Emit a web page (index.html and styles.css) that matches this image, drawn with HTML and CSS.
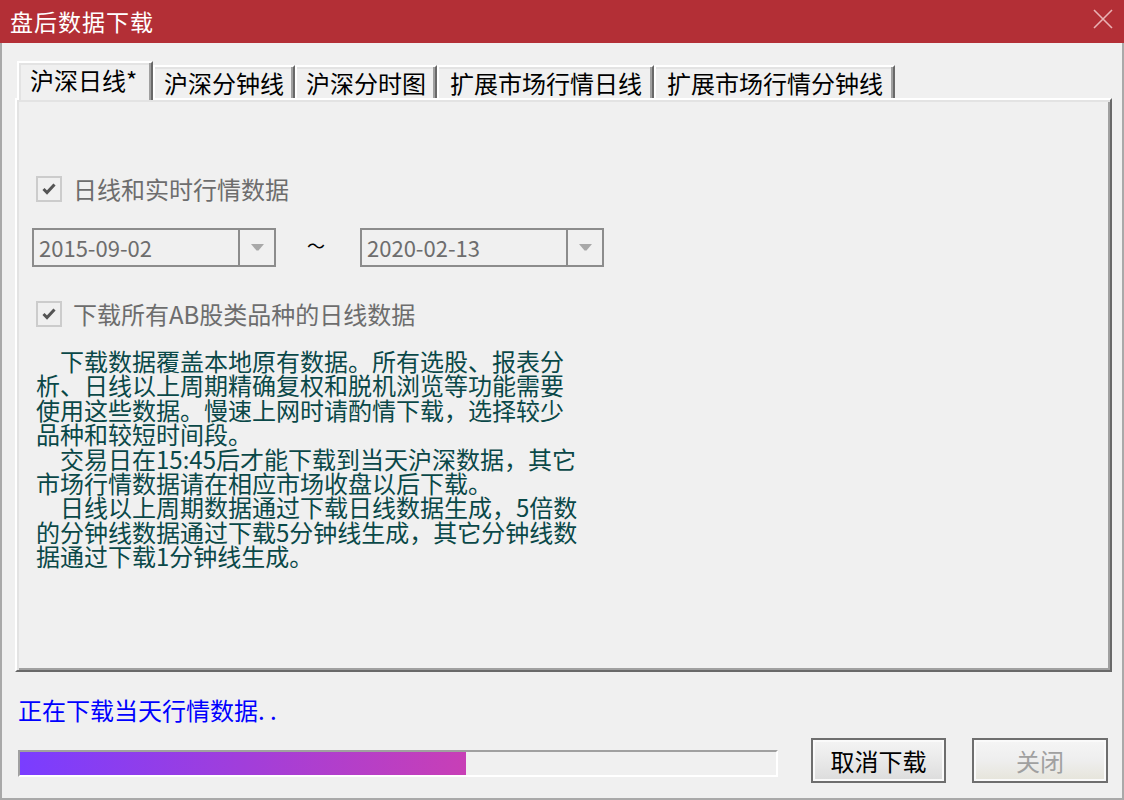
FILE: index.html
```html
<!DOCTYPE html>
<html lang="zh-CN">
<head>
    <meta charset="UTF-8">
    <meta name="viewport" content="width=device-width, initial-scale=1.0">
    <title>盘后数据下载</title>
    <link rel="stylesheet" href="styles.css">
</head>
<body>
    <div class="window">
        <div class="titlebar">
            <span class="title">盘后数据下载</span>
            <svg class="close" width="20" height="20" viewBox="0 0 20 20">
                <path d="M1 1 L19 19 M19 1 L1 19" stroke="#e9b2b4" stroke-width="1.6" fill="none"/>
            </svg>
        </div>
        <div class="client">
            <div class="tabs">
                <div class="tab active">沪深日线*</div>
                <div class="tab">沪深分钟线</div>
                <div class="tab">沪深分时图</div>
                <div class="tab wide">扩展市场行情日线</div>
                <div class="tab wide">扩展市场行情分钟线</div>
            </div>

            <div class="panel">
                <div class="check-row first">
                    <span class="checkbox">
                        <svg width="14" height="12" viewBox="0 0 14 12">
                            <path d="M1.5 6 L5 9.5 L12.5 1.5" stroke="#555" stroke-width="3" fill="none"/>
                        </svg>
                    </span>
                    <span class="check-label">日线和实时行情数据</span>
                </div>

                <div class="date-row">
                    <div class="combo">
                        <span class="combo-text">2015-09-02</span>
                        <span class="combo-btn">
                            <svg width="13" height="7" viewBox="0 0 13 7"><path d="M0 0 H13 L7.5 6.5 H5.5 Z" fill="#a8a8a8"/></svg>
                        </span>
                    </div>
                    <span class="tilde">～</span>
                    <div class="combo">
                        <span class="combo-text">2020-02-13</span>
                        <span class="combo-btn">
                            <svg width="13" height="7" viewBox="0 0 13 7"><path d="M0 0 H13 L7.5 6.5 H5.5 Z" fill="#a8a8a8"/></svg>
                        </span>
                    </div>
                </div>

                <div class="check-row second">
                    <span class="checkbox">
                        <svg width="14" height="12" viewBox="0 0 14 12">
                            <path d="M1.5 6 L5 9.5 L12.5 1.5" stroke="#555" stroke-width="3" fill="none"/>
                        </svg>
                    </span>
                    <span class="check-label">下载所有AB股类品种的日线数据</span>
                </div>

                <div class="notes">
                    <div class="indent">下载数据覆盖本地原有数据。所有选股、报表分</div>
                    <div>析、日线以上周期精确复权和脱机浏览等功能需要</div>
                    <div>使用这些数据。慢速上网时请酌情下载，选择较少</div>
                    <div>品种和较短时间段。</div>
                    <div class="indent">交易日在15:45后才能下载到当天沪深数据，其它</div>
                    <div>市场行情数据请在相应市场收盘以后下载。</div>
                    <div class="indent">日线以上周期数据通过下载日线数据生成，5倍数</div>
                    <div>的分钟线数据通过下载5分钟线生成，其它分钟线数</div>
                    <div>据通过下载1分钟线生成。</div>
                </div>
            </div>

            <div class="status">正在下载当天行情数据. .</div>

            <div class="bottom-row">
                <div class="progress">
                    <div class="progress-fill" style="width: 59%"></div>
                </div>
                <button class="btn cancel">取消下载</button>
                <button class="btn close-btn" disabled>关闭</button>
            </div>
        </div>
    </div>
</body>
</html>
```

FILE: styles.css
```css
body {
    margin: 0;
    background-color: #f0f0f0;
    font-family: "Noto Sans CJK SC", sans-serif;
}
.window {
    width: 1124px;
    height: 800px;
    display: flex;
    flex-direction: column;
    background-color: #f0f0f0;
}
.titlebar {
    height: 43px;
    flex-shrink: 0;
    background-color: #b32f36;
    display: flex;
    align-items: center;
    justify-content: space-between;
    padding: 0 11px 0 10px;
}
.title {
    color: #fff;
    font-size: 23px;
    line-height: 43px;
    letter-spacing: 1px;
}
.close {
    align-self: flex-start;
    margin-top: 9px;
}
.client {
    flex: 1;
    border-left: 2px solid #a9a9a9;
    border-right: 2px solid #a9a9a9;
    border-bottom: 2px solid #a9a9a9;
}

/* tabs */
.tabs {
    display: flex;
    align-items: flex-end;
    height: 37px;
    margin: 18px 0 0 15px;
}
.tab {
    box-sizing: border-box;
    height: 33px;
    padding: 0 9px;
    display: flex;
    align-items: center;
    font-size: 24px;
    line-height: 26px;
    color: #000;
    background-color: #f0f0f0;
    border-top: 2px solid #fff;
    border-left: 2px solid #fff;
    border-right: 2px solid #696969;
    box-shadow: inset -2px 0 0 #a0a0a0, inset 0 2px 0 #e3e3e3;
}
.tab.wide {
    padding: 0 10px 0 11px;
}
.tab.active {
    position: relative;
    z-index: 1;
    width: 136px;
    height: 39px;
    margin-bottom: -2px;
    padding: 0 0 3px 11px;
    box-shadow: inset -2px 0 0 #a0a0a0, inset 2px 2px 0 #e3e3e3;
}

/* panel */
.panel {
    box-sizing: border-box;
    width: 1097px;
    height: 574px;
    margin-left: 13px;
    border: 2px solid;
    border-color: #fff #696969 #696969 #fff;
    box-shadow: inset 2px 2px 0 #e3e3e3, inset -2px -2px 0 #a0a0a0;
    overflow: hidden;
}
.check-row {
    display: flex;
    align-items: center;
    height: 26px;
    margin-left: 19px;
}
.check-row.first {
    margin-top: 76px;
}
.check-row.second {
    margin-top: 34px;
}
.checkbox {
    box-sizing: border-box;
    width: 26px;
    height: 26px;
    border: 2px solid #cccccc;
    display: flex;
    align-items: center;
    justify-content: center;
    margin-right: 11px;
}
.check-label {
    font-size: 24px;
    line-height: 26px;
    color: #6d6d6d;
}
.date-row {
    display: flex;
    align-items: center;
    margin: 26px 0 0 15px;
}
.combo {
    box-sizing: border-box;
    width: 244px;
    height: 39px;
    border: 2px solid #8c8c8c;
    display: flex;
}
.combo-text {
    flex: 1;
    padding-left: 5px;
    font-size: 22px;
    line-height: 35px;
    color: #6d6d6d;
}
.combo-btn {
    width: 34px;
    border-left: 2px solid #8c8c8c;
    display: flex;
    align-items: center;
    justify-content: center;
}
.tilde {
    width: 84px;
    text-align: center;
    font-size: 18px;
    line-height: 20px;
    color: #000;
    margin-top: -6px;
    padding-right: 4px;
    box-sizing: border-box;
}
.notes {
    margin: 22px 0 0 19px;
    font-size: 24px;
    line-height: 24.4px;
    color: #0a4848;
    white-space: nowrap;
}
.notes .indent {
    padding-left: 24px;
}

/* bottom */
.status {
    margin: 24px 0 0 16px;
    font-size: 24px;
    line-height: 28px;
    color: #0000ff;
}
.bottom-row {
    display: flex;
    align-items: flex-start;
    margin: 14px 0 0 16px;
}
.progress {
    box-sizing: border-box;
    width: 760px;
    height: 27px;
    margin-top: 12px;
    border: 2px solid;
    border-color: #a0a0a0 #fff #fff #a0a0a0;
    background-color: #f0f0f0;
}
.progress-fill {
    height: 100%;
    background: linear-gradient(to right, #7a3dff, #c83fb6);
}
.btn {
    box-sizing: border-box;
    height: 45px;
    padding: 0;
    border: 2px solid #6e6e6e;
    box-shadow: inset 0 0 0 2px #fafafa;
    background: linear-gradient(#f4f4f4, #e9e9e9 50%, #dcdcdc);
    font-family: "Noto Sans CJK SC", sans-serif;
    font-size: 24px;
    color: #000;
}
.btn.cancel {
    width: 135px;
    margin-left: 33px;
}
.btn.close-btn {
    width: 136px;
    margin-left: 26px;
    color: #a0a0a0;
    background: linear-gradient(#f5f5f5, #eeeeee 50%, #e6e4da);
}
```
